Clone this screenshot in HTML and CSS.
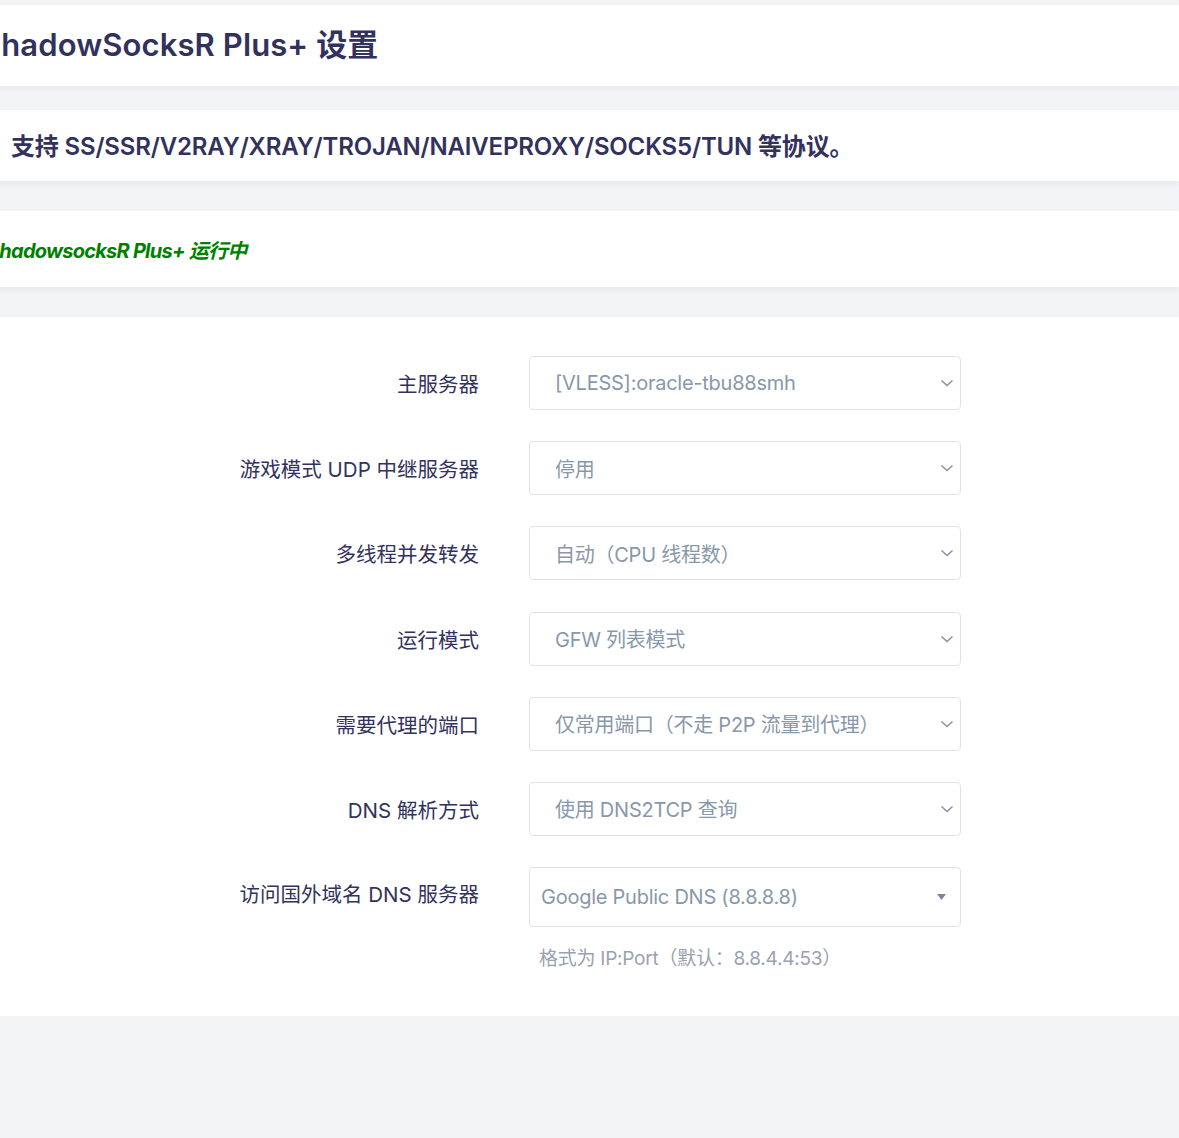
FILE: index.html
```html
<!DOCTYPE html>
<html lang="zh-CN">
<head>
<meta charset="utf-8">
<title>ShadowSocksR Plus+ 设置</title>
<link rel="stylesheet" href="styles.css">
</head>
<body>
<div class="page">
  <section class="card card-title">
    <h2 class="title">ShadowSocksR Plus+ 设置</h2>
  </section>
  <section class="card card-desc">
    <p class="desc">支持 SS/SSR/V2RAY/XRAY/TROJAN/NAIVEPROXY/SOCKS5/TUN 等协议。</p>
  </section>
  <section class="card card-status">
    <p class="status">ShadowsocksR Plus+ 运行中</p>
  </section>
  <section class="card card-form">
    <div class="row">
      <label class="label">主服务器</label>
      <div class="select"><span>[VLESS]:oracle-tbu88smh</span><svg class="chev" width="14" height="8" viewBox="0 0 14 8"><path d="M1.5 1.5 L7 6.5 L12.5 1.5" fill="none" stroke="#8a94a6" stroke-width="1.6"/></svg></div>
    </div>
    <div class="row">
      <label class="label">游戏模式 UDP 中继服务器</label>
      <div class="select"><span>停用</span><svg class="chev" width="14" height="8" viewBox="0 0 14 8"><path d="M1.5 1.5 L7 6.5 L12.5 1.5" fill="none" stroke="#8a94a6" stroke-width="1.6"/></svg></div>
    </div>
    <div class="row">
      <label class="label">多线程并发转发</label>
      <div class="select"><span>自动（CPU 线程数）</span><svg class="chev" width="14" height="8" viewBox="0 0 14 8"><path d="M1.5 1.5 L7 6.5 L12.5 1.5" fill="none" stroke="#8a94a6" stroke-width="1.6"/></svg></div>
    </div>
    <div class="row">
      <label class="label">运行模式</label>
      <div class="select"><span>GFW 列表模式</span><svg class="chev" width="14" height="8" viewBox="0 0 14 8"><path d="M1.5 1.5 L7 6.5 L12.5 1.5" fill="none" stroke="#8a94a6" stroke-width="1.6"/></svg></div>
    </div>
    <div class="row">
      <label class="label">需要代理的端口</label>
      <div class="select"><span>仅常用端口（不走 P2P 流量到代理）</span><svg class="chev" width="14" height="8" viewBox="0 0 14 8"><path d="M1.5 1.5 L7 6.5 L12.5 1.5" fill="none" stroke="#8a94a6" stroke-width="1.6"/></svg></div>
    </div>
    <div class="row">
      <label class="label">DNS 解析方式</label>
      <div class="select"><span>使用 DNS2TCP 查询</span><svg class="chev" width="14" height="8" viewBox="0 0 14 8"><path d="M1.5 1.5 L7 6.5 L12.5 1.5" fill="none" stroke="#8a94a6" stroke-width="1.6"/></svg></div>
    </div>
    <div class="row row-last">
      <label class="label">访问国外域名 DNS 服务器</label>
      <div class="field">
        <div class="select select-combo"><span>Google Public DNS (8.8.8.8)</span><svg class="tri" width="9" height="6" viewBox="0 0 9 6"><path d="M0 0 H9 L4.5 6 Z" fill="#7d889c"/></svg></div>
        <div class="help">格式为 IP:Port（默认：8.8.4.4:53）</div>
      </div>
    </div>
  </section>
</div>
</body>
</html>
```

FILE: styles.css
```css
* { box-sizing: border-box; }
html, body {
  margin: 0;
  padding: 0;
  background: #f3f4f6;
  overflow: hidden;
}
body {
  font-family: "Inter", "Noto Sans CJK SC", sans-serif;
  color: #32325d;
}
.page {
  margin-left: -20px;
  padding-top: 5px;
  width: calc(100% + 20px);
}
.card {
  background: #fff;
  box-shadow: 0 3px 6px rgba(50, 50, 93, 0.06);
}
.card-title {
  height: 81px;
  display: flex;
  align-items: center;
  padding-left: 1px;
  padding-bottom: 6px;
}
.title {
  margin: 0;
  font-size: 31px;
  font-weight: 600;
  letter-spacing: 0.1px;
}
.card-desc {
  margin-top: 24px;
  height: 71px;
  display: flex;
  align-items: center;
  padding-left: 31px;
  padding-bottom: 3px;
}
.desc {
  margin: 0;
  font-size: 24px;
  font-weight: 600;
  letter-spacing: -0.17px;
}
.card-status {
  margin-top: 30px;
  height: 76px;
  display: flex;
  align-items: center;
  padding-left: 7px;
}
.status {
  margin: 0;
  font-size: 20px;
  font-weight: 700;
  font-style: italic;
  color: #008000;
  letter-spacing: -0.75px;
}
.card-form {
  margin-top: 30px;
  padding: 39px 0 46px;
}
.row {
  display: grid;
  grid-template-columns: 499px 432px;
  column-gap: 50px;
  align-items: center;
  margin-bottom: 31.2px;
}
.row-last {
  align-items: start;
  margin-bottom: 0;
}
.label {
  text-align: right;
  font-size: 20.5px;
  color: #32325d;
}
.row-last .label {
  line-height: 56px;
}
.select {
  height: 54px;
  border: 1px solid #dfe3e8;
  border-radius: 4px;
  display: flex;
  align-items: center;
  justify-content: space-between;
  padding: 0 6px 0 25px;
  color: #8898aa;
  font-size: 20px;
  letter-spacing: -0.25px;
}
.chev { margin-right: 0; }
.select-combo {
  height: 60px;
  padding: 0 14px 0 11px;
}
.help {
  margin-top: 16px;
  padding-left: 10px;
  font-size: 19px;
  letter-spacing: -0.25px;
  color: #9aa1b0;
}
```
